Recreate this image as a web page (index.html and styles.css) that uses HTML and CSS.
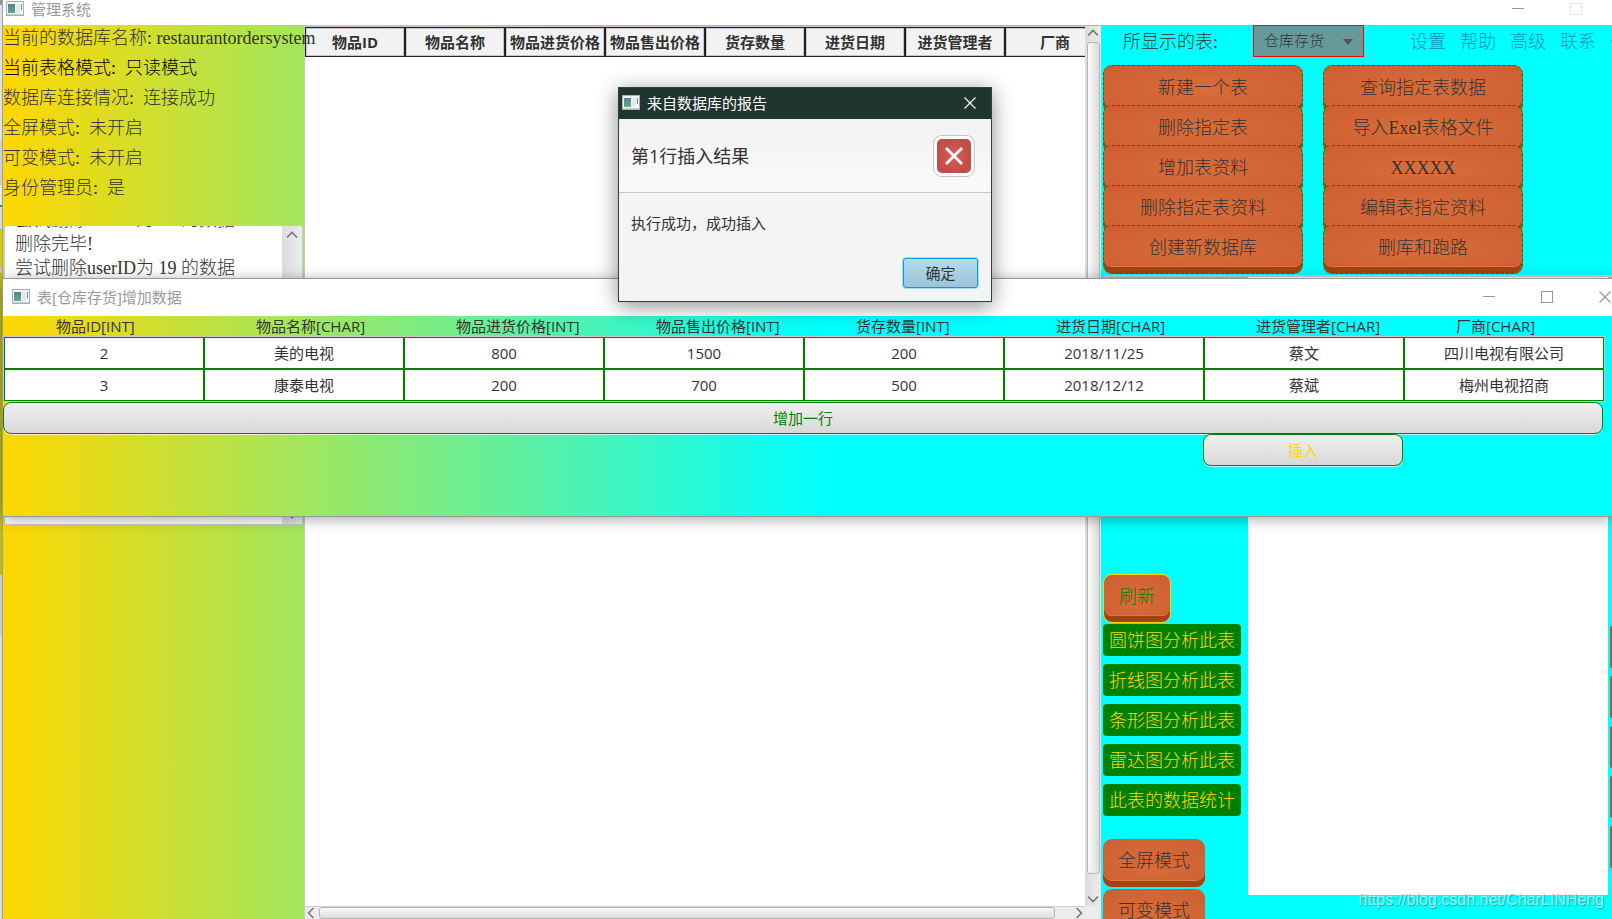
FILE: index.html
```html
<!DOCTYPE html>
<html lang="zh-CN">
<head>
<meta charset="utf-8">
<title>管理系统</title>
<link rel="stylesheet" href="styles.css">
</head>
<body>
<svg class="defs" aria-hidden="true">
  <defs>
    <linearGradient id="pane" x1="0" y1="0" x2="0" y2="1">
      <stop offset="0" stop-color="#4f84a6"/>
      <stop offset="1" stop-color="#5fae74"/>
    </linearGradient>
    <symbol id="app-icon" viewBox="0 0 18 15">
      <rect x="0.5" y="0.5" width="17" height="14" fill="#f4f6f7" stroke="#a9afb5"/>
      <rect x="1" y="13" width="16" height="1" fill="#c9ced3"/>
      <rect x="2" y="3" width="7" height="9" fill="url(#pane)"/>
      <rect x="10" y="3" width="4" height="9" fill="#e6e9ea"/>
      <rect x="15" y="3" width="1" height="6" fill="#56a08a"/>
    </symbol>
    <symbol id="up" viewBox="0 0 12 8"><path d="M1 6.5 6 1.5 11 6.5" fill="none" stroke="#777" stroke-width="1.6"/></symbol>
    <symbol id="down" viewBox="0 0 12 8"><path d="M1 1.5 6 6.5 11 1.5" fill="none" stroke="#777" stroke-width="1.6"/></symbol>
    <symbol id="left" viewBox="0 0 8 12"><path d="M6.5 1 1.5 6 6.5 11" fill="none" stroke="#777" stroke-width="1.6"/></symbol>
    <symbol id="right" viewBox="0 0 8 12"><path d="M1.5 1 6.5 6 1.5 11" fill="none" stroke="#777" stroke-width="1.6"/></symbol>
    <symbol id="min" viewBox="0 0 12 12"><path d="M0 5.5h12" stroke="currentColor"/></symbol>
    <symbol id="max" viewBox="0 0 12 12"><rect x="0.5" y="0.5" width="11" height="11" fill="none" stroke="currentColor"/></symbol>
    <symbol id="close" viewBox="0 0 12 12"><path d="M0.5 0.5 11.5 11.5M11.5 0.5 0.5 11.5" stroke="currentColor" stroke-width="1.2"/></symbol>
  </defs>
</svg>

<div class="desktop">
  <div class="behind"></div>
  <main class="window main-window">
    <header class="titlebar main-titlebar">
      <svg class="app-icon"><use href="#app-icon"/></svg>
      <span class="title">管理系统</span>
      <div class="main-controls">
        <button class="win-btn" aria-label="最小化"><svg><use href="#min"/></svg></button>
        <button class="win-btn" aria-label="最大化" disabled><svg><use href="#max"/></svg></button>
      </div>
    </header>

    <div class="workspace">
      <aside class="status">
        <ul class="status-list">
          <li>当前的数据库名称: restaurantordersystem</li>
          <li class="strong">当前表格模式:&nbsp; 只读模式</li>
          <li>数据库连接情况:&nbsp; 连接成功</li>
          <li>全屏模式:&nbsp; 未开启</li>
          <li>可变模式:&nbsp; 未开启</li>
          <li>身份管理员:&nbsp; 是</li>
        </ul>
        <div class="log">
          <textarea class="log-text" aria-label="操作记录" readonly>尝试删除userID为 18 的数据
删除完毕!
尝试删除userID为 19 的数据</textarea>
          <div class="log-scroll">
            <svg class="arrow-v"><use href="#up"/></svg>
            <svg class="arrow-v"><use href="#down"/></svg>
          </div>
        </div>
      </aside>

      <section class="table-view">
        <div class="table-area">
          <table class="data-table">
            <thead>
              <tr><th>物品ID</th><th>物品名称</th><th>物品进货价格</th><th>物品售出价格</th><th>货存数量</th><th>进货日期</th><th>进货管理者</th><th>厂商</th></tr>
            </thead>
          </table>
        </div>
        <div class="scroll-v">
          <svg class="arrow-v"><use href="#up"/></svg>
          <div class="thumb-v"></div>
          <svg class="arrow-v"><use href="#down"/></svg>
        </div>
        <div class="scroll-h">
          <svg class="arrow-h"><use href="#left"/></svg>
          <div class="thumb-h"></div>
          <svg class="arrow-h"><use href="#right"/></svg>
        </div>
        <div class="scroll-corner"></div>
      </section>

      <section class="tools">
        <div class="tools-head">
          <label class="tools-label" for="shown">所显示的表:</label>
          <div class="combo">
            <select id="shown"><option>仓库存货</option></select>
            <svg class="combo-arrow" viewBox="0 0 10 6"><path d="M0 0h10L5 6z" fill="#5c5050"/></svg>
          </div>
          <nav class="links">
            <a href="#">设置</a><a href="#">帮助</a><a href="#">高级</a><a href="#">联系</a><a href="#" aria-label="更多">一</a>
          </nav>
        </div>
        <div class="menus">
          <div class="menu">
            <button class="brick">新建一个表</button>
            <button class="brick">删除指定表</button>
            <button class="brick">增加表资料</button>
            <button class="brick">删除指定表资料</button>
            <button class="brick">创建新数据库</button>
          </div>
          <div class="menu">
            <button class="brick">查询指定表数据</button>
            <button class="brick">导入Exel表格文件</button>
            <button class="brick">XXXXX</button>
            <button class="brick">编辑表指定资料</button>
            <button class="brick">删库和跑路</button>
          </div>
        </div>
        <div class="lower">
          <div class="actions">
            <button class="brick refresh">刷新</button>
            <div class="charts">
              <button class="chart-btn">圆饼图分析此表</button>
              <button class="chart-btn">折线图分析此表</button>
              <button class="chart-btn">条形图分析此表</button>
              <button class="chart-btn">雷达图分析此表</button>
              <button class="chart-btn">此表的数据统计</button>
            </div>
            <div class="modes">
              <button class="brick mode">全屏模式</button>
              <button class="brick mode">可变模式</button>
            </div>
          </div>
          <div class="canvas"></div>
          <div class="edge"><i></i><i></i><i></i><i></i><i></i></div>
        </div>
      </section>
    </div>
  </main>

  <section class="window insert-window">
    <header class="titlebar insert-titlebar">
      <svg class="app-icon"><use href="#app-icon"/></svg>
      <span class="title">表[仓库存货]增加数据</span>
      <div class="insert-controls">
        <button class="win-btn" aria-label="最小化"><svg><use href="#min"/></svg></button>
        <button class="win-btn" aria-label="最大化"><svg><use href="#max"/></svg></button>
        <button class="win-btn" aria-label="关闭"><svg><use href="#close"/></svg></button>
      </div>
    </header>
    <form class="insert-form">
      <div class="labels">
        <label id="c1" for="f1">物品ID[INT]</label><label id="c2" for="f2">物品名称[CHAR]</label><label id="c3" for="f3">物品进货价格[INT]</label><label id="c4" for="f4">物品售出价格[INT]</label><label id="c5" for="f5">货存数量[INT]</label><label id="c6" for="f6">进货日期[CHAR]</label><label id="c7" for="f7">进货管理者[CHAR]</label><label id="c8" for="f8">厂商[CHAR]</label>
      </div>
      <div class="fields">
        <input id="f1" value="2"><input id="f2" value="美的电视"><input id="f3" value="800"><input id="f4" value="1500"><input id="f5" value="200"><input id="f6" value="2018/11/25"><input id="f7" value="蔡文"><input id="f8" value="四川电视有限公司">
        <input aria-labelledby="c1" value="3"><input aria-labelledby="c2" value="康泰电视"><input aria-labelledby="c3" value="200"><input aria-labelledby="c4" value="700"><input aria-labelledby="c5" value="500"><input aria-labelledby="c6" value="2018/12/12"><input aria-labelledby="c7" value="蔡斌"><input aria-labelledby="c8" value="梅州电视招商">
      </div>
      <div class="form-actions">
        <button type="button" class="soft add-row">增加一行</button>
        <button type="button" class="soft insert">插入</button>
      </div>
    </form>
  </section>

  <section class="dialog" role="alertdialog" aria-labelledby="dlg-title">
    <header class="dialog-title">
      <svg class="app-icon"><use href="#app-icon"/></svg>
      <span id="dlg-title">来自数据库的报告</span>
      <button class="win-btn dialog-close" aria-label="关闭"><svg><use href="#close"/></svg></button>
    </header>
    <div class="dialog-head">
      <span>第1行插入结果</span>
      <svg class="error-icon" viewBox="0 0 42 42">
        <defs><radialGradient id="red"><stop offset="0" stop-color="#dc5a5a"/><stop offset="1" stop-color="#c14d49"/></radialGradient></defs>
        <rect x="0.5" y="0.5" width="41" height="41" rx="8" fill="#fff" stroke="#c4c4c4"/>
        <rect x="4" y="4" width="34" height="34" rx="5" fill="url(#red)"/>
        <path d="M13 13 29 29M29 13 13 29" stroke="#fff" stroke-width="2.8"/>
      </svg>
    </div>
    <p class="dialog-body">执行成功，成功插入</p>
    <div class="dialog-foot"><button class="ok">确定</button></div>
  </section>

  <div class="watermark">https://blog.csdn.net/CharLINHeng</div>
</div>
</body>
</html>
```
FILE: styles.css
```css
:root {
  --ui: "Open Sans", "Noto Sans CJK SC", sans-serif;
  --song: "Liberation Serif", "Noto Sans CJK SC", serif;
  --ink: #333;
}

* { box-sizing: border-box; }

body {
  margin: 0;
  font: 15px/20px var(--ui);
  color: var(--ink);
}

button, input, select, textarea {
  margin: 0;
  padding: 0;
  border: 0;
  border-radius: 0;
  font: inherit;
  color: inherit;
  background: none;
}

.defs { position: absolute; width: 0; height: 0; }

.desktop {
  position: relative;
  display: flex;
  height: 100vh;
  overflow: hidden;
}

.behind {
  flex: 0 0 3px;
  border-right: 1px solid #a0a0a0;
  background: linear-gradient(#9a9a9a 5px, #dfe1e3 5px 140px, #cdcfd1 140px 185px, #e6e6e6 185px 205px, #3c8c3c 205px 207px, #d8d8d8 207px 229px, #c8cc28 229px 267px, #c5c5c5 267px 273px, #b9bb22 273px 575px, #c9cdd1 575px 636px, #dadde2 636px);
}

.main-window {
  flex: 1;
  min-width: 0;
  display: flex;
  flex-direction: column;
  background: #fff;
}

.titlebar {
  display: flex;
  align-items: center;
  background: #fff;
  color: #999;
}
.main-titlebar { height: 25px; padding: 0 30px 8px 3px; flex: none; }
.insert-titlebar { height: 37px; padding: 0 1px 2px 9px; }
.app-icon { width: 18px; height: 15px; margin-right: 7px; flex: none; }
.main-controls { margin-left: auto; display: flex; gap: 46px; }
.insert-controls { margin-left: auto; display: flex; gap: 46px; }
.win-btn { width: 12px; height: 12px; display: block; }
.win-btn svg { width: 12px; height: 12px; display: block; }
.win-btn:disabled { color: #e4e4e4; }

.workspace {
  flex: 1;
  min-height: 0;
  display: flex;
  background: linear-gradient(to right, gold, cyan 51%);
}

/* status column */
.status {
  flex: 0 0 301px;
  min-width: 0;
  font-family: var(--song);
  font-size: 18px;
  font-weight: 300;
}
.status-list {
  list-style: none;
  margin: 0;
  padding: 0 0 20px;
  white-space: nowrap;
  position: relative;
  z-index: 1;
}
.status-list li { height: 30px; line-height: 27px; }
.status-list .strong { color: #000; }
.log {
  display: flex;
  height: 300px;
  margin: 0 1px;
  border: 1px solid #c8c8c8;
  border-radius: 3px;
  background: #fff;
  overflow: hidden;
}
.log-text {
  flex: 1;
  min-width: 0;
  height: 330px;
  margin-top: -18px;
  padding: 0 0 0 10px;
  line-height: 24px;
  resize: none;
  overflow: hidden;
  outline: none;
}
.log-scroll {
  width: 20px;
  padding: 5px 0;
  display: flex;
  flex-direction: column;
  justify-content: space-between;
  align-items: center;
  background: linear-gradient(to right, #dcdcdc, #ececec);
}
.arrow-v { width: 12px; height: 8px; flex: none; }
.arrow-h { width: 8px; height: 12px; flex: none; }

/* table */
.table-view {
  flex: 1;
  min-width: 0;
  display: grid;
  grid-template-columns: 1fr 16px;
  grid-template-rows: 1fr 13px;
  margin-top: 1px;
  border-left: 1px solid #c8c8c8;
}
.table-area { background: #fff; overflow: hidden; min-width: 0; border-top: 1px solid #c8c8c8; }
.data-table { table-layout: fixed; width: 800px; border-collapse: separate; border-spacing: 0; }
.data-table th {
  height: 30px;
  padding: 0;
  border: 1px solid #222;
  background: #f2f2f2;
  box-shadow: inset 0 0 0 1px #c8c8c8;
  font-weight: 700;
  white-space: nowrap;
}
.scroll-v {
  display: flex;
  flex-direction: column;
  align-items: center;
  gap: 5px;
  padding: 3px 0;
  background: linear-gradient(to right, #dcdcdc, #ececec);
}
.thumb-v {
  flex: 1;
  width: 13px;
  margin-bottom: 16px;
  border: 1px solid #b4b4b4;
  border-radius: 3px;
  background: linear-gradient(to right, #fafafa, #dcdcdc);
}
.scroll-h {
  display: flex;
  align-items: center;
  gap: 4px;
  padding: 0 2px;
  border-top: 1px solid #d0d0d0;
  background: #ececec;
}
.thumb-h {
  flex: 1;
  height: 12px;
  margin-right: 16px;
  border: 1px solid #b4b4b4;
  border-radius: 3px;
  background: linear-gradient(#fafafa, #dcdcdc);
}
.scroll-corner { background: #ececec; }

/* right tools */
.tools {
  flex: 0 0 511px;
  display: flex;
  flex-direction: column;
  min-height: 0;
  padding-left: 2px;
  overflow: hidden;
  background: cyan;
  font-family: var(--song);
  font-size: 18px;
  font-weight: 300;
}
.tools-head { display: flex; height: 40px; padding-left: 20px; flex: none; white-space: nowrap; }
.tools-label { width: 130px; flex: none; line-height: 35px; }
.combo { position: relative; width: 111px; height: 32px; flex: none; }
.combo select {
  width: 100%;
  height: 100%;
  padding-left: 10px;
  appearance: none;
  border: 1px solid red;
  background: #699;
  font-size: 15px;
}
.combo-arrow { position: absolute; right: 11px; top: 14px; width: 10px; height: 6px; pointer-events: none; }
.links { display: flex; gap: 14px; padding-left: 46px; line-height: 34px; }
.links a { color: #0090c8; text-decoration: none; }

.menus { display: flex; gap: 20px; flex: none; }
.menu { width: 200px; display: flex; flex-direction: column; }
.brick {
  height: 49px;
  padding-bottom: 4px;
  border-radius: 9px;
  background: radial-gradient(ellipse at center, #d86e3a, #cd5d32);
  box-shadow: inset 0 -6px #a34313, inset 0 -7px #e07846;
  text-align: center;
  white-space: nowrap;
}
.menu .brick { border: 1px dashed green; }
.menu .brick + .brick { margin-top: -9px; }

.lower { flex: 1; min-height: 0; display: flex; margin-top: 1px; border-top: 2px solid #c8d0d0; }
.actions { width: 145px; flex: none; padding-top: 297px; display: flex; flex-direction: column; align-items: flex-start; }
.refresh { width: 68px; border: 1px solid gold; color: green; flex: none; }
.charts { display: flex; flex-direction: column; gap: 8px; margin-top: 1px; }
.chart-btn { width: 138px; height: 32px; padding-top: 2px; border-radius: 4px; background: green; color: gold; white-space: nowrap; }
.modes { display: flex; flex-direction: column; gap: 2px; margin-top: 23px; }
.mode { width: 102px; height: 48px; flex: none; }
.canvas { flex: 1; background: #fff; margin-bottom: 24px; }
.edge { width: 4px; padding: 349px 0 0 2px; display: flex; flex-direction: column; gap: 8px; }
.edge i { display: block; height: 42px; flex: none; border-radius: 8px 0 0 8px; background: #b8592c; }

/* insert window */
.insert-window {
  position: absolute;
  left: 3px;
  right: 0;
  top: 279px;
  height: 237px;
  background: linear-gradient(to right, gold, cyan 51%);
  box-shadow: 0 0 0 1px #9a9a9a, 0 2px 14px rgba(0, 0, 0, .4);
  z-index: 2;
}
.insert-form { padding-right: 8px; }
.labels, .fields { display: grid; grid-template-columns: repeat(8, 1fr); margin-left: 1px; }
.labels label { padding-left: 52px; white-space: nowrap; line-height: 21px; }
.fields { box-shadow: 0 0 0 1px #c8c8c8; }
.fields input {
  min-width: 0;
  height: 32px;
  padding-bottom: 1px;
  border: 1px solid green;
  background: linear-gradient(#f2f2f2, #fff 4px);
  text-align: center;
}
.form-actions { display: grid; grid-template-columns: repeat(8, 1fr); margin: 1px 1px 0 0; }
.soft {
  height: 32px;
  border: 1px solid green;
  border-radius: 8px;
  background: linear-gradient(#f0f0f0, #d8d8d8);
  box-shadow: 0 1px rgba(255, 255, 255, .7);
}
.add-row { grid-column: 1 / -1; color: green; }
.insert { grid-column: 7; color: gold; }

/* dialog */
.dialog {
  position: absolute;
  left: 618px;
  top: 87px;
  width: 374px;
  height: 215px;
  border: 1px solid #2b4340;
  background: #f4f4f4;
  box-shadow: 0 4px 20px rgba(0, 0, 0, .45);
  z-index: 3;
}
.dialog-title {
  display: flex;
  align-items: center;
  height: 31px;
  padding: 0 15px 2px 3px;
  background: #203430;
  color: #fff;
}
.dialog-close { margin-left: auto; }
.dialog-head {
  display: flex;
  align-items: center;
  justify-content: space-between;
  height: 74px;
  padding: 0 16px 0 12px;
  border-bottom: 1px solid #c6c6c6;
  background: linear-gradient(#f2f2f2, #fafafa);
  font-size: 18px;
}
.error-icon { width: 42px; height: 42px; }
.dialog-body { margin: 0; padding: 20px 12px 25px; }
.dialog-foot { display: flex; justify-content: flex-end; padding-right: 13px; }
.ok {
  width: 75px;
  height: 30px;
  border: 1px solid #039ed3;
  border-radius: 3px;
  background: linear-gradient(#b5dcec, #9cc3d8);
  box-shadow: 0 0 0 1px #a6dcee;
}

.watermark {
  position: absolute;
  right: 8px;
  bottom: 9px;
  font: 16px/20px "Liberation Sans", sans-serif;
  color: rgba(255, 255, 255, .65);
  text-shadow: 1px 1px 1px rgba(0, 80, 80, .45);
}
```
